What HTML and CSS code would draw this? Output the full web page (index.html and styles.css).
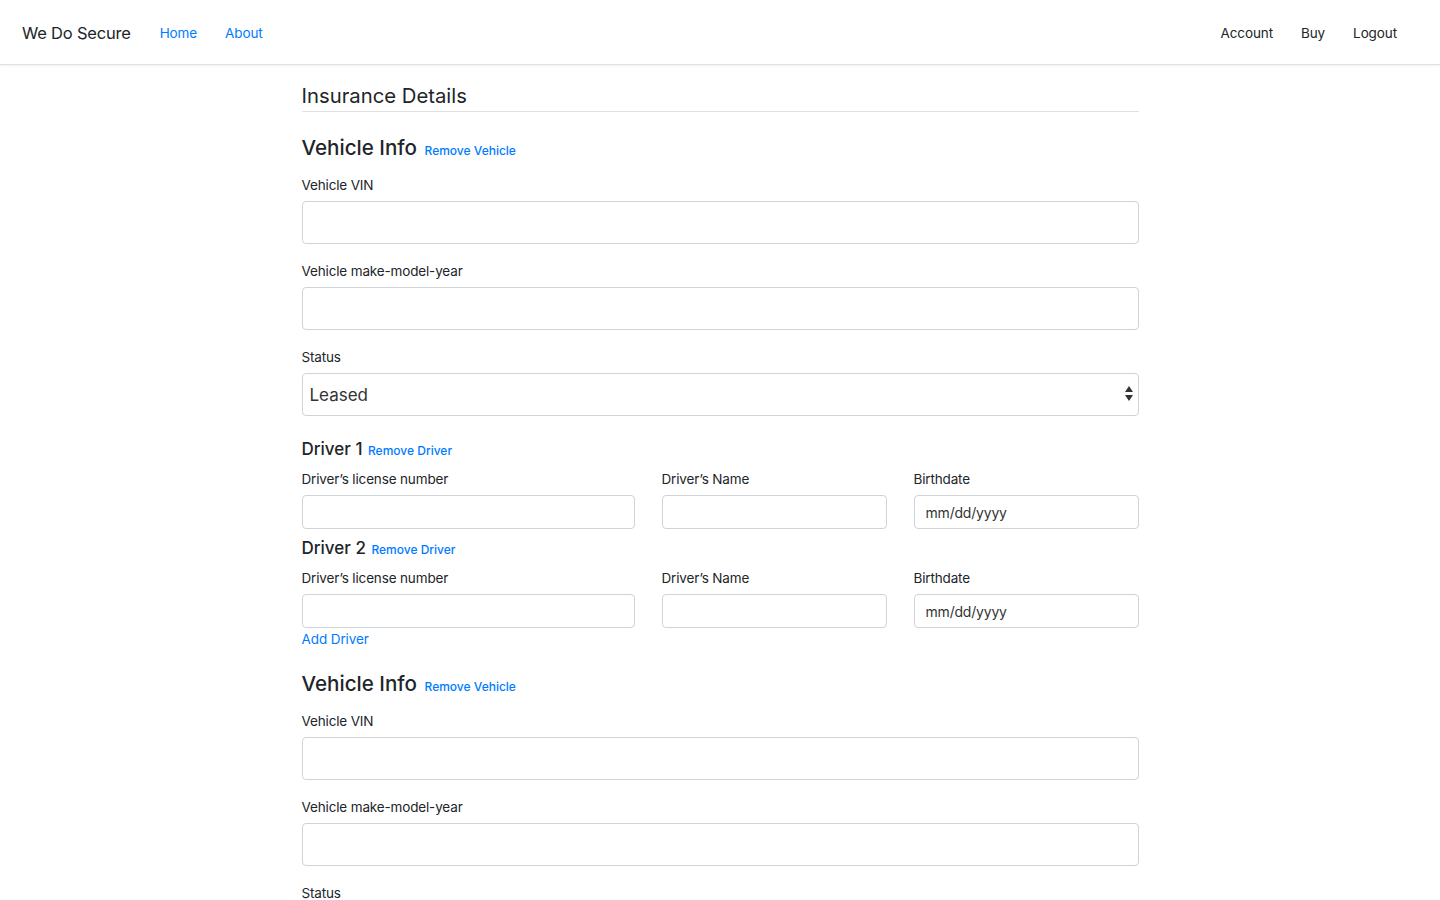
FILE: index.html
```html
<!DOCTYPE html>
<html lang="en">
<head>
<meta charset="utf-8">
<title>We Do Secure</title>
<link rel="stylesheet" href="styles.css">
</head>
<body>
<nav class="navbar">
  <a class="brand" href="#">We Do Secure</a>
  <ul class="nav nav-left">
    <li><a class="nav-link link-blue" href="#">Home</a></li>
    <li><a class="nav-link link-blue" href="#">About</a></li>
  </ul>
  <ul class="nav nav-right">
    <li><a class="nav-link" href="#">Account</a></li>
    <li><a class="nav-link" href="#">Buy</a></li>
    <li><a class="nav-link" href="#">Logout</a></li>
  </ul>
</nav>

<main class="container">
  <h1 class="page-title">Insurance Details</h1>
  <hr class="divider">

  <section class="vehicle">
    <h2 class="vehicle-title">Vehicle Info <a class="small-link" href="#">Remove Vehicle</a></h2>
    <div class="field">
      <label class="label">Vehicle VIN</label>
      <input class="control control-lg" type="text">
    </div>
    <div class="field">
      <label class="label">Vehicle make-model-year</label>
      <input class="control control-lg" type="text">
    </div>
    <div class="field field-status">
      <label class="label">Status</label>
      <div class="select-wrap">
        <select class="control control-lg select">
          <option>Leased</option>
          <option>Owned</option>
          <option>Financed</option>
        </select>
        <span class="select-arrows">
          <svg width="8" height="15" viewBox="0 0 8 15"><path d="M4 0 L8 6 L0 6 Z" fill="#333"/><path d="M4 15 L8 9 L0 9 Z" fill="#333"/></svg>
        </span>
      </div>
    </div>

    <div class="driver">
      <h3 class="driver-title">Driver 1 <a class="small-link" href="#">Remove Driver</a></h3>
      <div class="driver-row">
        <div class="dfield">
          <label class="label">Driver’s license number</label>
          <input class="control control-sm" type="text">
        </div>
        <div class="dfield">
          <label class="label">Driver’s Name</label>
          <input class="control control-sm" type="text">
        </div>
        <div class="dfield">
          <label class="label">Birthdate</label>
          <input class="control control-sm date" type="text" placeholder="mm/dd/yyyy">
        </div>
      </div>
    </div>

    <div class="driver">
      <h3 class="driver-title">Driver 2 <a class="small-link" href="#">Remove Driver</a></h3>
      <div class="driver-row">
        <div class="dfield">
          <label class="label">Driver’s license number</label>
          <input class="control control-sm" type="text">
        </div>
        <div class="dfield">
          <label class="label">Driver’s Name</label>
          <input class="control control-sm" type="text">
        </div>
        <div class="dfield">
          <label class="label">Birthdate</label>
          <input class="control control-sm date" type="text" placeholder="mm/dd/yyyy">
        </div>
      </div>
    </div>
    <a class="add-link" href="#">Add Driver</a>
  </section>

  <section class="vehicle">
    <h2 class="vehicle-title">Vehicle Info <a class="small-link" href="#">Remove Vehicle</a></h2>
    <div class="field">
      <label class="label">Vehicle VIN</label>
      <input class="control control-lg" type="text">
    </div>
    <div class="field">
      <label class="label">Vehicle make-model-year</label>
      <input class="control control-lg" type="text">
    </div>
    <div class="field field-status">
      <label class="label">Status</label>
      <div class="select-wrap">
        <select class="control control-lg select">
          <option>Leased</option>
        </select>
        <span class="select-arrows">
          <svg width="8" height="15" viewBox="0 0 8 15"><path d="M4 0 L8 6 L0 6 Z" fill="#333"/><path d="M4 15 L8 9 L0 9 Z" fill="#333"/></svg>
        </span>
      </div>
    </div>
  </section>
</main>
</body>
</html>
```

FILE: styles.css
```css
* { box-sizing: border-box; }
html, body { margin: 0; padding: 0; }
body {
  font-family: Inter, "Liberation Sans", sans-serif;
  color: #212529;
  background: #fff;
  font-size: 13.5px;
  line-height: 1.5;
}
a { text-decoration: none; }

.navbar {
  height: 65px;
  display: flex;
  align-items: center;
  padding: 3px 29px 0 22px;
  border-bottom: 1px solid #dee2e6;
  box-shadow: 0 1px 3px rgba(0,0,0,0.06);
}
.brand {
  font-size: 16.5px;
  color: #212529;
  margin-right: 15px;
  letter-spacing: -0.2px;
}
.nav {
  display: flex;
  list-style: none;
  margin: 0;
  padding: 0;
}
.nav-right { margin-left: auto; }
.nav-link {
  display: block;
  padding: 8px 14px;
  font-size: 13.5px;
  letter-spacing: -0.1px;
  color: #212529;
}
.link-blue { color: #007bff; }

.container {
  width: 837px;
  margin: 0 auto;
  padding-top: 16px;
}
.page-title {
  font-size: 20.3px;
  font-weight: 400;
  margin: 0;
  line-height: 30px;
}
.divider {
  border: 0;
  border-top: 1px solid rgba(0,0,0,0.12);
  margin: 0 0 20px;
}
.vehicle-title {
  font-size: 20.6px;
  font-weight: 500;
  margin: 0 0 8px;
  line-height: 32px;
}
.small-link {
  font-size: 12px;
  font-weight: 500;
  color: #007bff;
  margin-left: 2px;
}
.driver-title .small-link { margin-left: 1px; }
.field { margin-bottom: 17px; }
.label {
  display: block;
  font-size: 13.5px;
  letter-spacing: -0.15px;
  line-height: 20px;
  margin-bottom: 6px;
}
.control {
  display: block;
  width: 100%;
  border: 1px solid #ced4da;
  border-radius: 4px;
  background: #fff;
  color: #495057;
  font-family: inherit;
  outline: none;
}
.control-lg {
  height: 43px;
  font-size: 17px;
  padding: 0 7px;
}
.control-sm {
  height: 34px;
  font-size: 14px;
  letter-spacing: -0.2px;
  padding: 0 11px;
}
.date::placeholder { color: #333; opacity: 1; }
.select-wrap { position: relative; }
.select {
  appearance: none;
  -webkit-appearance: none;
  color: #333;
}
.select-arrows {
  position: absolute;
  right: 6px;
  top: 13px;
  line-height: 0;
  pointer-events: none;
}
.field-status { margin-bottom: 21px; }
.driver-title {
  font-size: 17px;
  font-weight: 500;
  margin: 0 0 6px;
  line-height: 24px;
}
.driver-row {
  display: grid;
  grid-template-columns: 333px 225px 225px;
  column-gap: 27px;
}
.driver + .driver { margin-top: 7px; }
.add-link {
  display: block;
  font-size: 13.5px;
  letter-spacing: -0.1px;
  color: #007bff;
  line-height: 22px;
  margin-top: 0;
  margin-bottom: 18px;
}
```
